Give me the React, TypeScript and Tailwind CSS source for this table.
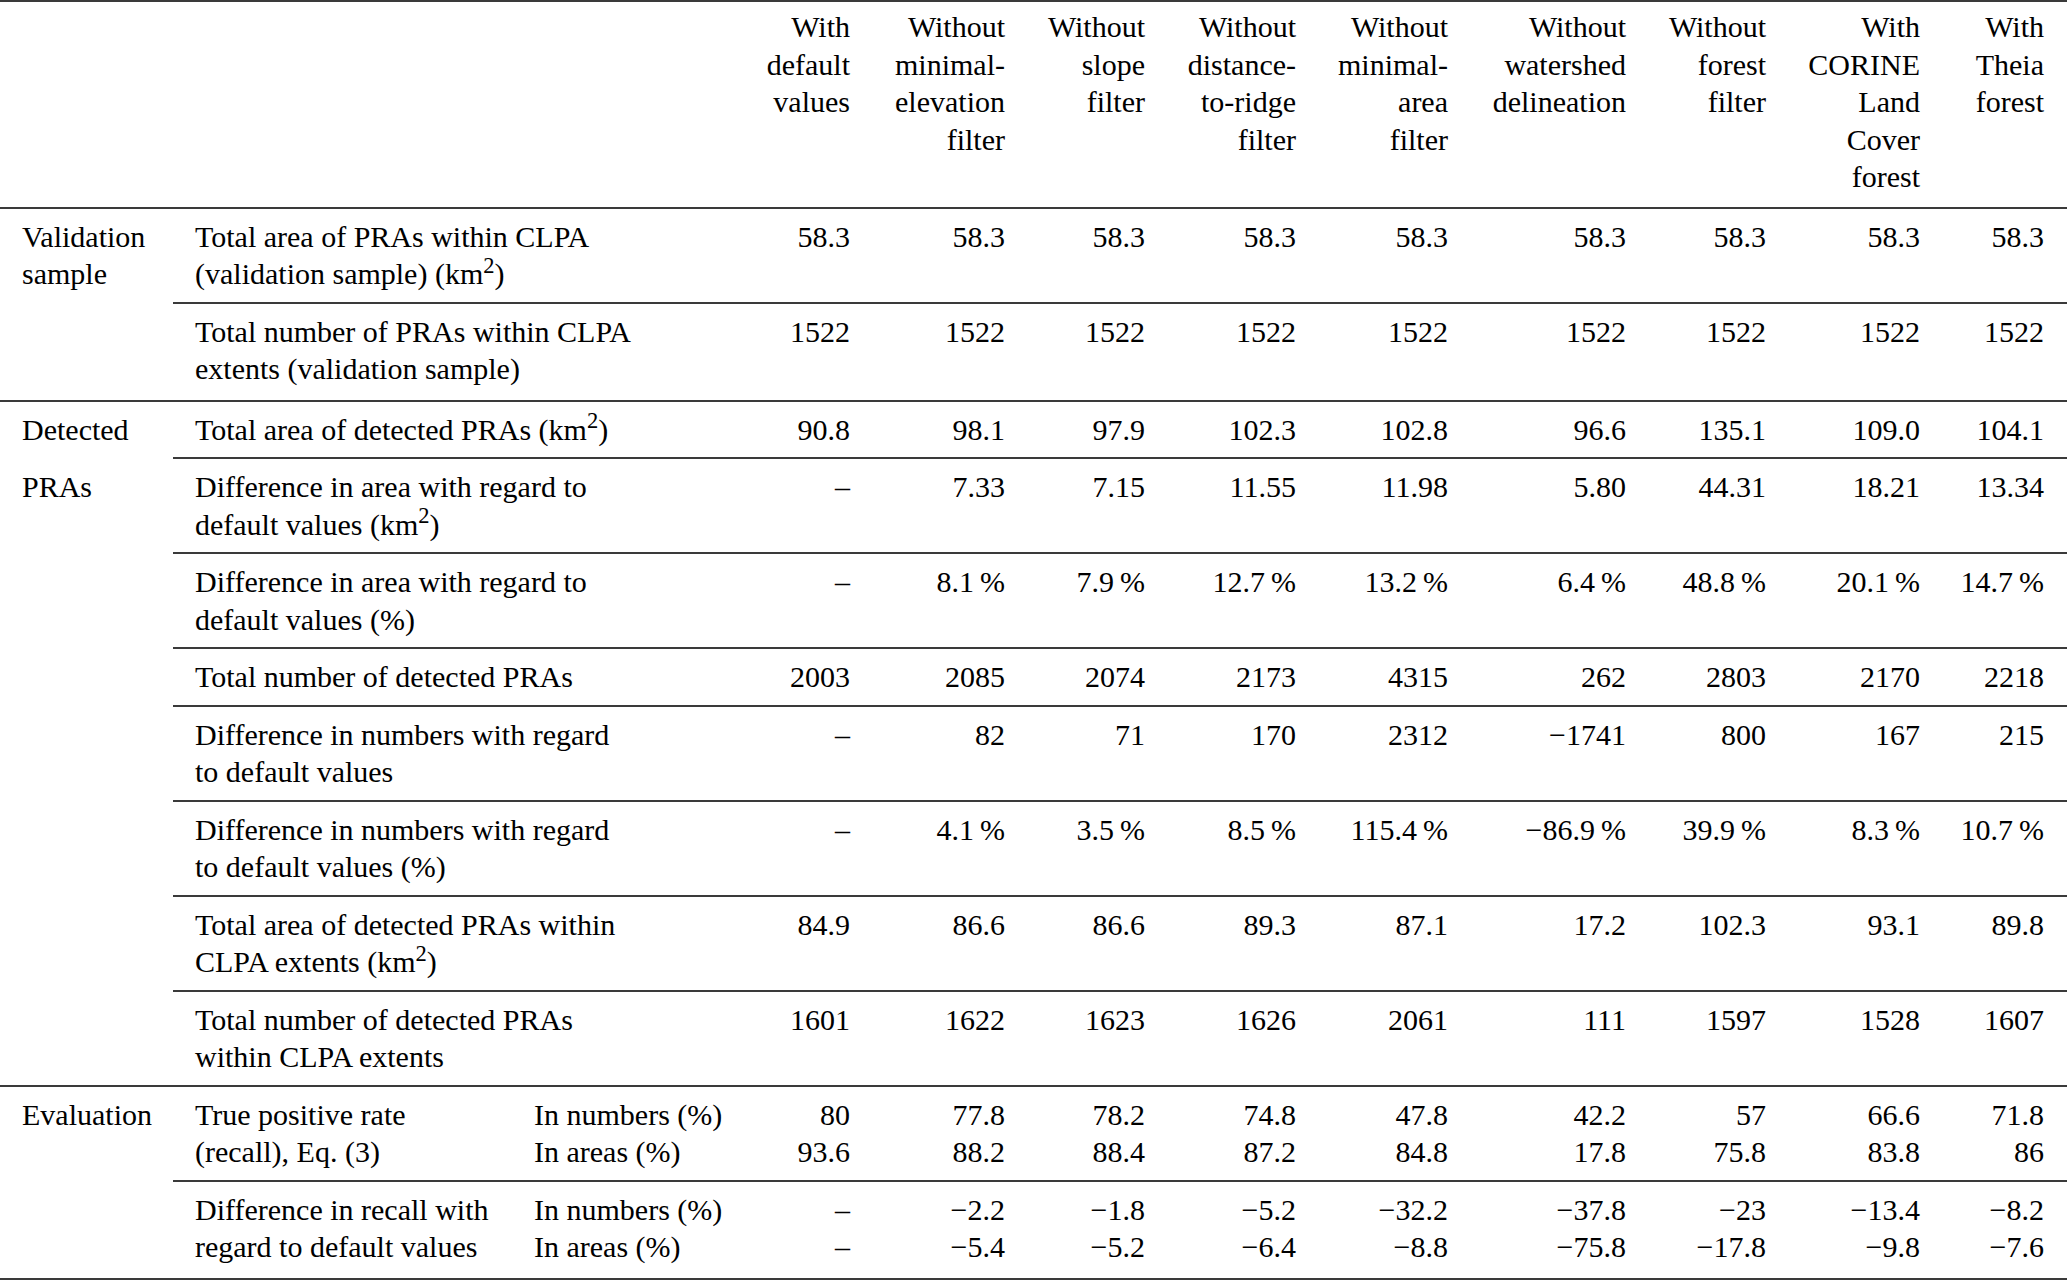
import React from "react";

const headers: string[][] = [
  ["With", "default", "values"],
  ["Without", "minimal-", "elevation", "filter"],
  ["Without", "slope", "filter"],
  ["Without", "distance-", "to-ridge", "filter"],
  ["Without", "minimal-", "area", "filter"],
  ["Without", "watershed", "delineation"],
  ["Without", "forest", "filter"],
  ["With", "CORINE", "Land", "Cover", "forest"],
  ["With", "Theia", "forest"],
];

const km2 = (
  <>
    (km<sup>2</sup>)
  </>
);

type Row = {
  label: React.ReactNode[];
  sub?: string[];
  values: (string | string[])[];
  tall?: boolean;
};

type Section = {
  title: string[];
  split?: boolean;
  rows: Row[];
};

const pct = (v: string) => `${v}\u2009%`;

const sections: Section[] = [
  {
    title: ["Validation", "sample"],
    rows: [
      {
        label: ["Total area of PRAs within CLPA", <>(validation sample) {km2}</>],
        values: Array(9).fill("58.3"),
      },
      {
        label: ["Total number of PRAs within CLPA", "extents (validation sample)"],
        values: Array(9).fill("1522"),
        tall: true,
      },
    ],
  },
  {
    title: ["Detected", "PRAs"],
    split: true,
    rows: [
      {
        label: [<>Total area of detected PRAs {km2}</>],
        values: ["90.8", "98.1", "97.9", "102.3", "102.8", "96.6", "135.1", "109.0", "104.1"],
      },
      {
        label: ["Difference in area with regard to", <>default values {km2}</>],
        values: ["–", "7.33", "7.15", "11.55", "11.98", "5.80", "44.31", "18.21", "13.34"],
      },
      {
        label: ["Difference in area with regard to", "default values (%)"],
        values: ["–", pct("8.1"), pct("7.9"), pct("12.7"), pct("13.2"), pct("6.4"), pct("48.8"), pct("20.1"), pct("14.7")],
      },
      {
        label: ["Total number of detected PRAs"],
        values: ["2003", "2085", "2074", "2173", "4315", "262", "2803", "2170", "2218"],
      },
      {
        label: ["Difference in numbers with regard", "to default values"],
        values: ["–", "82", "71", "170", "2312", "\u22121741", "800", "167", "215"],
      },
      {
        label: ["Difference in numbers with regard", "to default values (%)"],
        values: ["–", pct("4.1"), pct("3.5"), pct("8.5"), pct("115.4"), pct("\u221286.9"), pct("39.9"), pct("8.3"), pct("10.7")],
      },
      {
        label: ["Total area of detected PRAs within", <>CLPA extents {km2}</>],
        values: ["84.9", "86.6", "86.6", "89.3", "87.1", "17.2", "102.3", "93.1", "89.8"],
      },
      {
        label: ["Total number of detected PRAs", "within CLPA extents"],
        values: ["1601", "1622", "1623", "1626", "2061", "111", "1597", "1528", "1607"],
      },
    ],
  },
  {
    title: ["Evaluation"],
    rows: [
      {
        label: ["True positive rate", "(recall), Eq. (3)"],
        sub: ["In numbers (%)", "In areas (%)"],
        values: [
          ["80", "93.6"],
          ["77.8", "88.2"],
          ["78.2", "88.4"],
          ["74.8", "87.2"],
          ["47.8", "84.8"],
          ["42.2", "17.8"],
          ["57", "75.8"],
          ["66.6", "83.8"],
          ["71.8", "86"],
        ],
      },
      {
        label: ["Difference in recall with", "regard to default values"],
        sub: ["In numbers (%)", "In areas (%)"],
        values: [
          ["–", "–"],
          ["\u22122.2", "\u22125.4"],
          ["\u22121.8", "\u22125.2"],
          ["\u22125.2", "\u22126.4"],
          ["\u221232.2", "\u22128.8"],
          ["\u221237.8", "\u221275.8"],
          ["\u221223", "\u221217.8"],
          ["\u221213.4", "\u22129.8"],
          ["\u22128.2", "\u22127.6"],
        ],
        tall: true,
      },
    ],
  },
];

// right part of every row: label | sub label | 9 value columns | right margin
const gridCols =
  "grid grid-cols-[361px_186px_130px_155px_140px_151px_152px_178px_140px_154px_124px_23px]";

const Lines = ({ lines, right }: { lines: React.ReactNode[]; right?: boolean }) => (
  <div className={right ? "flex flex-col items-end" : "flex flex-col"}>
    {lines.map((l, i) => (
      <div key={i} className="whitespace-nowrap">
        {l}
      </div>
    ))}
  </div>
);

const DataRow = ({ row, first }: { row: Row; first: boolean }) => (
  <div
    className={`${gridCols} pt-[9px] ${row.tall ? "pb-[12px]" : "pb-[9px]"} ${
      first ? "" : "border-t-2 border-[#3a3a3a]"
    }`}
  >
    <div className={`pl-[22px] ${row.sub ? "" : "col-span-2"}`}>
      <Lines lines={row.label} />
    </div>
    {row.sub && <Lines lines={row.sub} />}
    {row.values.map((v, i) => (
      <div key={i} className="text-right">
        <Lines lines={Array.isArray(v) ? v : [v]} right />
      </div>
    ))}
    <div />
  </div>
);

export default function App() {
  return (
    <div className="w-[2067px] bg-white text-black font-['Liberation_Serif','Times_New_Roman',serif] text-[30px] leading-[37.5px]">
      <div className="border-t-2 border-b-2 border-[#3a3a3a]">
        <div className="flex pt-[6px] pb-[11px]">
          <div className="w-[173px] shrink-0" />
          <div className={`${gridCols} flex-1`}>
            <div />
            <div />
            {headers.map((h, i) => (
              <Lines key={i} lines={h} right />
            ))}
            <div />
          </div>
        </div>

        {sections.map((s, si) => (
          <div key={si} className="flex border-t-2 border-[#3a3a3a]">
            <div className="w-[173px] shrink-0 pl-[22px]">
              {s.split ? (
                <div className="flex flex-col">
                  <div className="py-[9px]">{s.title[0]}</div>
                  <div className="pt-[11px]">{s.title[1]}</div>
                </div>
              ) : (
                <div className="py-[9px]">
                  <Lines lines={s.title} />
                </div>
              )}
            </div>
            <div className="flex flex-1 flex-col">
              {s.rows.map((r, ri) => (
                <DataRow key={ri} row={r} first={ri === 0} />
              ))}
            </div>
          </div>
        ))}
      </div>
    </div>
  );
}
